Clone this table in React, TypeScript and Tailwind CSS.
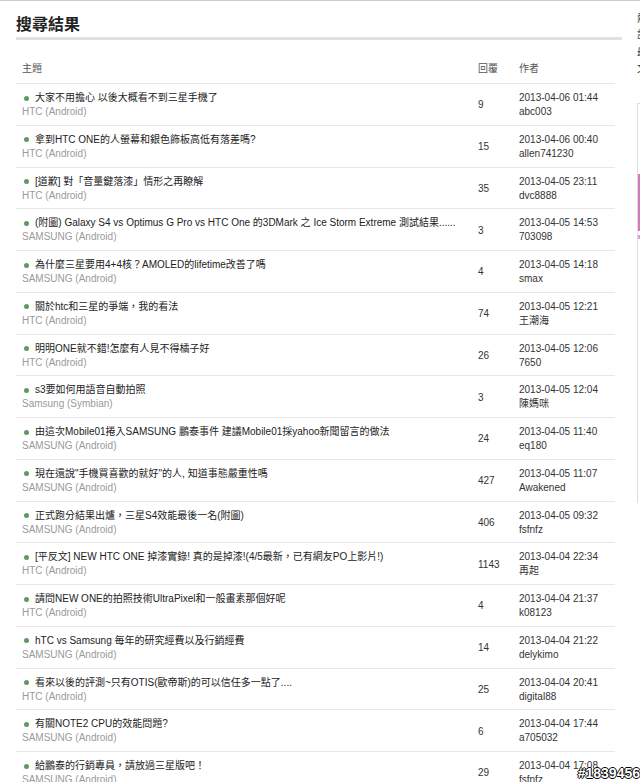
import React from 'react';

type Topic = {
  title: string;
  forum: string;
  replies: number;
  date: string;
  author: string;
};

const topics: Topic[] = [
  { title: '大家不用擔心 以後大概看不到三星手機了', forum: 'HTC (Android)', replies: 9, date: '2013-04-06 01:44', author: 'abc003' },
  { title: '拿到HTC ONE的人螢幕和銀色飾板高低有落差嗎?', forum: 'HTC (Android)', replies: 15, date: '2013-04-06 00:40', author: 'allen741230' },
  { title: '[道歉] 對「音量鍵落漆」情形之再瞭解', forum: 'HTC (Android)', replies: 35, date: '2013-04-05 23:11', author: 'dvc8888' },
  { title: '(附圖) Galaxy S4 vs Optimus G Pro vs HTC One 的3DMark 之 Ice Storm Extreme 測試結果......', forum: 'SAMSUNG (Android)', replies: 3, date: '2013-04-05 14:53', author: '703098' },
  { title: '為什麼三星要用4+4核？AMOLED的lifetime改善了嗎', forum: 'SAMSUNG (Android)', replies: 4, date: '2013-04-05 14:18', author: 'smax' },
  { title: '關於htc和三星的爭端，我的看法', forum: 'HTC (Android)', replies: 74, date: '2013-04-05 12:21', author: '王潮海' },
  { title: '明明ONE就不錯!怎麼有人見不得橘子好', forum: 'HTC (Android)', replies: 26, date: '2013-04-05 12:06', author: '7650' },
  { title: 's3要如何用語音自動拍照', forum: 'Samsung (Symbian)', replies: 3, date: '2013-04-05 12:04', author: '陳媽咪' },
  { title: '由這次Mobile01捲入SAMSUNG 鵬泰事件 建議Mobile01採yahoo新聞留言的做法', forum: 'SAMSUNG (Android)', replies: 24, date: '2013-04-05 11:40', author: 'eq180' },
  { title: '現在還說"手機買喜歡的就好"的人, 知道事態嚴重性嗎', forum: 'SAMSUNG (Android)', replies: 427, date: '2013-04-05 11:07', author: 'Awakened' },
  { title: '正式跑分結果出爐，三星S4效能最後一名(附圖)', forum: 'SAMSUNG (Android)', replies: 406, date: '2013-04-05 09:32', author: 'fsfnfz' },
  { title: '[平反文] NEW HTC ONE 掉漆實錄! 真的是掉漆!(4/5最新，已有網友PO上影片!)', forum: 'HTC (Android)', replies: 1143, date: '2013-04-04 22:34', author: '再起' },
  { title: '請問NEW ONE的拍照技術UltraPixel和一般畫素那個好呢', forum: 'HTC (Android)', replies: 4, date: '2013-04-04 21:37', author: 'k08123' },
  { title: 'hTC vs Samsung 每年的研究經費以及行銷經費', forum: 'SAMSUNG (Android)', replies: 14, date: '2013-04-04 21:22', author: 'delykimo' },
  { title: '看來以後的評測~只有OTIS(歐帝斯)的可以信任多一點了....', forum: 'HTC (Android)', replies: 25, date: '2013-04-04 20:41', author: 'digital88' },
  { title: '有關NOTE2 CPU的效能問題?', forum: 'SAMSUNG (Android)', replies: 6, date: '2013-04-04 17:44', author: 'a705032' },
  { title: '給鵬泰的行銷專員，請放過三星版吧！', forum: 'SAMSUNG (Android)', replies: 29, date: '2013-04-04 17:08', author: 'fsfnfz' },
];

function TopicRow({ t }: { t: Topic }) {
  return (
    <div className="grid grid-cols-[462px_41px_96px] h-[41.75px] border-b border-[#e8e8e8] shrink-0">
      <div className="pl-[6px] pt-[7px] leading-[14px] whitespace-nowrap">
        <div className="flex items-center text-[#222]">
          <span className="w-[5px] h-[5px] rounded-full bg-[#5f9a5f] ml-[2px] mr-[6px] shrink-0" />
          {t.title}
        </div>
        <div className="text-[#9a9a9a]">{t.forum}</div>
      </div>
      <div className="flex items-center pt-[1px] text-[#333]">{t.replies}</div>
      <div className="pt-[7px] leading-[14px] text-[#333] whitespace-nowrap">
        <div>{t.date}</div>
        <div>{t.author}</div>
      </div>
    </div>
  );
}

export default function App() {
  return (
    <div className="relative w-[640px] h-[782px] overflow-hidden bg-white border-t border-[#cccccc] font-['Liberation_Sans','Noto_Sans_CJK_TC',sans-serif] text-[10px]">
      <div className="flex h-full">
        {/* main column */}
        <div className="w-[622px] pl-[16px] shrink-0">
          <h1 className="text-[16px] leading-[20px] font-semibold text-[#222] pt-[14px] mb-[2px]">搜尋結果</h1>
          <div className="h-[3px] bg-[#e1e1e1]" />

          <div className="w-[599px]">
            <div className="grid grid-cols-[462px_41px_96px] h-[44px] items-end pb-[7px] border-b border-[#e8e8e8] leading-[14px] text-[#555]">
              <div className="pl-[6px]">主題</div>
              <div>回覆</div>
              <div>作者</div>
            </div>
            {topics.map((t, i) => (
              <TopicRow key={i} t={t} />
            ))}
          </div>
        </div>

        {/* sidebar, cut off at the right edge */}
        <div className="ml-[15px] w-[120px] shrink-0 text-[#333] leading-[16px] pt-[10px]">
          <div>熱門</div>
          <div>討論</div>
          <div className="mt-[2px]">最新</div>
          <div>文章</div>
          <div className="mt-[26px] h-[400px] border-l border-t border-[#dddddd] pt-[70px]">
            <div className="h-[57px] bg-[#d67ab8]" />
            <div className="h-[4px] mt-[4px] bg-[#e2a0cc]" />
          </div>
        </div>
      </div>

      <div className="absolute right-0 bottom-[1px] text-[14px] leading-[16px] font-bold text-white [text-shadow:-1px_0_#000,1px_0_#000,0_1px_#000,0_-1px_#000]">
        #1839456
      </div>
    </div>
  );
}
